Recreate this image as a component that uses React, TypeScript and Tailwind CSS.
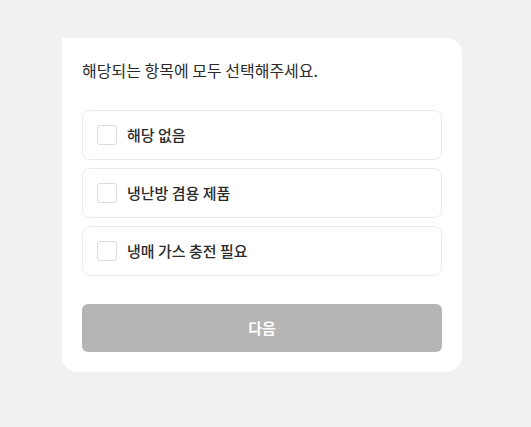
import React, { useState } from 'react';

const OPTIONS = ['해당 없음', '냉난방 겸용 제품', '냉매 가스 충전 필요'];

const App: React.FC = () => {
  const [checked, setChecked] = useState<boolean[]>(OPTIONS.map(() => false));

  const toggle = (i: number) =>
    setChecked((prev) => prev.map((v, idx) => (idx === i ? !v : v)));

  return (
    <div
      className="min-h-screen w-full bg-[#f1f1f1] pt-[38px] pl-[62px]"
      style={{ fontFamily: '"Noto Sans CJK KR", "Noto Sans", sans-serif' }}
    >
      <div className="w-[400px] bg-white rounded-2xl rounded-tl-[2px] p-5">
        <h2 className="text-[16px] leading-6 text-[#2a2a2a] font-normal">
          해당되는 항목에 모두 선택해주세요.
        </h2>

        <div className="mt-7 flex flex-col gap-2">
          {OPTIONS.map((label, i) => (
            <label
              key={label}
              className="flex items-center h-[50px] px-[14px] gap-[10px] border border-[#ececec] rounded-lg cursor-pointer"
            >
              <span
                onClick={() => toggle(i)}
                className={`w-5 h-5 rounded-[3px] border-[1.5px] ${
                  checked[i] ? 'border-[#333] bg-[#333]' : 'border-[#dcdcdc] bg-white'
                }`}
              />
              <span className="text-[15px] text-[#2b2b2b] font-medium leading-5">{label}</span>
            </label>
          ))}
        </div>

        <button
          disabled
          className="mt-7 w-full h-12 rounded-md bg-[#b5b5b5] text-white text-[15px] font-semibold"
        >
          다음
        </button>
      </div>
    </div>
  );
};

export default App;
